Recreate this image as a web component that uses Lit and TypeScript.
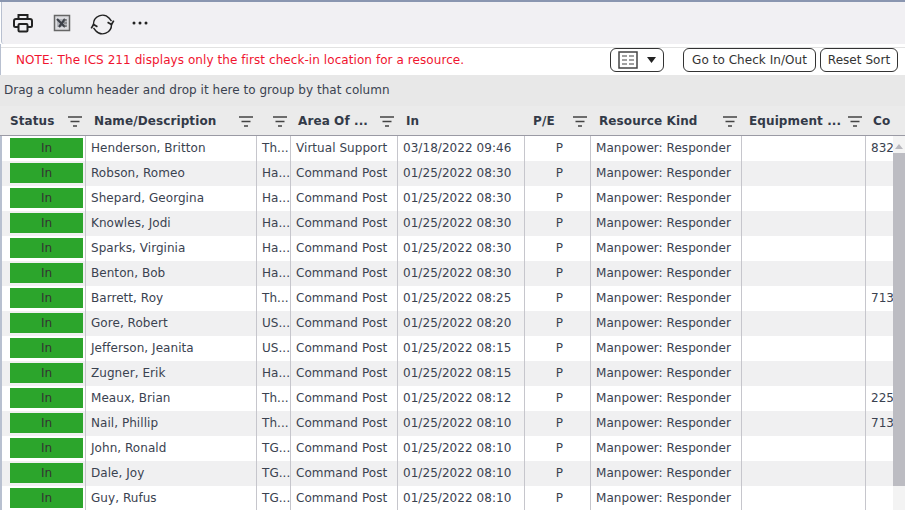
import { LitElement, html, css, svg } from "lit";
import { customElement } from "lit/decorators.js";

const rows: [string, string, string, string, string][] = [
  ["Henderson, Britton", "Th...", "Virtual Support", "03/18/2022 09:46", "832"],
  ["Robson, Romeo", "Ha...", "Command Post", "01/25/2022 08:30", ""],
  ["Shepard, Georgina", "Ha...", "Command Post", "01/25/2022 08:30", ""],
  ["Knowles, Jodi", "Ha...", "Command Post", "01/25/2022 08:30", ""],
  ["Sparks, Virginia", "Ha...", "Command Post", "01/25/2022 08:30", ""],
  ["Benton, Bob", "Ha...", "Command Post", "01/25/2022 08:30", ""],
  ["Barrett, Roy", "Th...", "Command Post", "01/25/2022 08:25", "713"],
  ["Gore, Robert", "US...", "Command Post", "01/25/2022 08:20", ""],
  ["Jefferson, Jeanita", "US...", "Command Post", "01/25/2022 08:15", ""],
  ["Zugner, Erik", "Ha...", "Command Post", "01/25/2022 08:15", ""],
  ["Meaux, Brian", "Th...", "Command Post", "01/25/2022 08:12", "225"],
  ["Nail, Phillip", "Th...", "Command Post", "01/25/2022 08:10", "713"],
  ["John, Ronald", "TG...", "Command Post", "01/25/2022 08:10", ""],
  ["Dale, Joy", "TG...", "Command Post", "01/25/2022 08:10", ""],
  ["Guy, Rufus", "TG...", "Command Post", "01/25/2022 08:10", ""],
];

const filter = svg`<svg class="fi" width="14" height="11" viewBox="0 0 14 11"><path d="M0 1h14M2.500 5.500h9M5 10h4" stroke="#444" stroke-width="1.400" fill="none"/></svg>`;

@customElement("app-root")
export class AppRoot extends LitElement {
  static styles = css`
    :host { display: block; width: 905px; height: 510px; overflow: hidden; position: relative; background: #fff;
      font-family: "DejaVu Sans", sans-serif; font-size: 12px; color: #333; }
    * { box-sizing: border-box; }
    .top { height: 2px; background: #8a96b0; }
    .toolbar { height: 42px; margin-left: 1px; background: #f1f0f3; border-left: 1px solid #b8c0d0; display: flex; align-items: flex-start; border-bottom-left-radius: 3px; position: relative; }
    .toolbar svg { position: absolute; }
    .i1 { left: 10px; top: 9px; }
    .i2 { left: 51px; top: 12px; }
    .i3 { left: 87px; top: 10px; }
    .i4 { left: 130px; top: 19px; }
    .note { height: 31px; display: flex; align-items: flex-start; position: relative; background: #fff; border-left: 1px solid #b8c0d0; }
    .note::before { content: ""; position: absolute; left: 0; right: 0; top: 3px; border-top: 1px solid #e2e2e2; }
    .msg { color: #f0142f; margin: 8px 0 0 15px; line-height: 16px; letter-spacing: 0.07px; width: 594px; white-space: nowrap; }
    .btn { height: 24px; border: 1px solid #333; border-radius: 6px; background: #fff; display: flex; align-items: center; justify-content: center; color: #333; margin-top: 4px; white-space: nowrap; }
    .b0 { width: 54px; gap: 9px; margin-right: 19px; }
    .b1 { width: 133px; margin-right: 4px; letter-spacing: 0.05px; }
    .b2 { width: 78px; letter-spacing: 0.05px; }
    .group { height: 31px; background: #e8e8e8; padding: 7px 0 0 4px; line-height: 16px; color: #3a4250; letter-spacing: 0.03px; white-space: nowrap; }
    .grid { display: grid; grid-template-columns: 86px 171px 34px 107px 127px 66px 151px 124px 39px; }
    .hc { height: 30px; background: #ebebeb; border-bottom: 1px solid #9a9aa4; font-weight: 700; color: #333a48; display: flex; align-items: center; line-height: 16px; letter-spacing: 0.1px; white-space: nowrap; position: relative; }
    .fi { position: absolute; top: 10px; }
    .c { height: 25px; line-height: 24px; border-right: 1px solid #c6c6cc; white-space: nowrap; overflow: hidden; padding-left: 5px; color: #3a4250; letter-spacing: 0.05px; }
    .alt { background: #f0f0f1; }
    .status { padding: 2px 2px 0 7px; border-left: 2px solid transparent; }
    .pill { height: 20px; width: 73px; margin-left: 1px; background: #2ca52c; color: #333; text-align: center; line-height: 20px; }
    .ctr { text-align: center; padding-left: 4px; }
    .last { border-right: 0; }
    .scroll { position: absolute; right: 0; top: 136px; bottom: 0; width: 12px; background: #f3f3f3; }
    .arrow { position: absolute; left: 2px; top: 8px; width: 0; height: 0; border-left: 4px solid transparent; border-right: 4px solid transparent; border-bottom: 5px solid #b8b8be; }
    .thumb { position: absolute; left: 0; top: 17px; height: 333px; width: 12px; background: #bcbcc2; }
    .edge { position: absolute; left: 0; top: 136px; bottom: 0; width: 2px; background: #b8c0d0; }
  `;

  private header(label: string, left: number, filterLeft: number | null) {
    return html`<div class="hc"><span style="margin-left:${left}px">${label}</span>${filterLeft === null ? "" : html`<span style="position:absolute;left:${filterLeft}px;top:0">${filter}</span>`}</div>`;
  }

  render() {
    return html`
      <div class="top"></div>
      <div class="toolbar">
        <svg class="i1" width="22" height="24" viewBox="0 0 22 22" fill="none" stroke="#222" stroke-width="2"><path d="M6.500 7V3h9v4"/><path d="M6 15H3.500a1.500 1.500 0 0 1-1.500-1.500V9a2 2 0 0 1 2-2h14a2 2 0 0 1 2 2v4.500a1.500 1.500 0 0 1-1.500 1.500H16"/><rect x="6.500" y="12" width="9" height="7.500" rx="1"/></svg>
        <svg class="i2" width="18" height="18" viewBox="0 0 18 18"><rect x="1.500" y="1.500" width="15" height="15" fill="#dcdce0" stroke="#666" stroke-width="1.500"/><rect x="4" y="5" width="10" height="8" fill="#b4b6bc"/><path d="M4 5l8 8M12 5l-6 8" stroke="#3c4048" stroke-width="2.200"/><path d="M11 6h3M11 9h3M11 12h3" stroke="#666" stroke-width="1"/></svg>
        <svg class="i3" width="27" height="25" viewBox="0 0 24 22" fill="none" stroke="#222" stroke-width="1.300"><path d="M4 11a8 8 0 0 1 14-5.500L20 8"/><path d="M20 11a8 8 0 0 1-14 5.500L4 14"/><path d="M22 7.500L20 11l-3.500-2" fill="none" stroke-width="1.500"/><path d="M2 14.500L4 11l3.500 2" fill="none" stroke-width="1.500"/></svg>
        <svg class="i4" width="16" height="4" viewBox="0 0 16 4" fill="#222"><circle cx="2" cy="2" r="1.500"/><circle cx="8" cy="2" r="1.500"/><circle cx="14" cy="2" r="1.500"/></svg>
      </div>
      <div class="note">
        <div class="msg">NOTE: The ICS 211 displays only the first check-in location for a resource.</div>
        <div class="btn b0">
          <svg width="20" height="18" viewBox="0 0 20 18" fill="none" stroke="#444"><rect x="1" y="1" width="18" height="16" stroke-width="1.500"/><path d="M4 5h5M11 5h5M4 9h5M11 9h5M4 13h5M11 13h5" stroke-width="1.200"/></svg>
          <svg width="9" height="6" viewBox="0 0 9 6"><path d="M0 0h9L4.500 6z" fill="#222"/></svg>
        </div>
        <div class="btn b1">Go to Check In/Out</div>
        <div class="btn b2">Reset Sort</div>
      </div>
      <div class="group">Drag a column header and drop it here to group by that column</div>
      <div class="grid">
        ${this.header("Status", 10, 68)}
        ${this.header("Name/Description", 8, 153)}
        ${this.header("", 0, 16)}
        ${this.header("Area Of ...", 7, 89)}
        ${this.header("In", 8, null)}
        ${this.header("P/E", 8, 48)}
        ${this.header("Resource Kind", 8, 132)}
        ${this.header("Equipment ...", 7, 106)}
        ${this.header("Co", 7, null)}
        ${rows.map((r, i) => {
          const a = i % 2 ? "alt" : "";
          return html`
            <div class="c status ${a}"><div class="pill">In</div></div>
            <div class="c ${a}">${r[0]}</div>
            <div class="c ${a}">${r[1]}</div>
            <div class="c ${a}">${r[2]}</div>
            <div class="c ${a}">${r[3]}</div>
            <div class="c ctr ${a}">P</div>
            <div class="c ${a}">Manpower: Responder</div>
            <div class="c ${a}"></div>
            <div class="c last ${a}">${r[4]}</div>`;
        })}
      </div>
      <div class="edge"></div>
      <div class="scroll"><div class="arrow"></div><div class="thumb"></div></div>
    `;
  }
}
